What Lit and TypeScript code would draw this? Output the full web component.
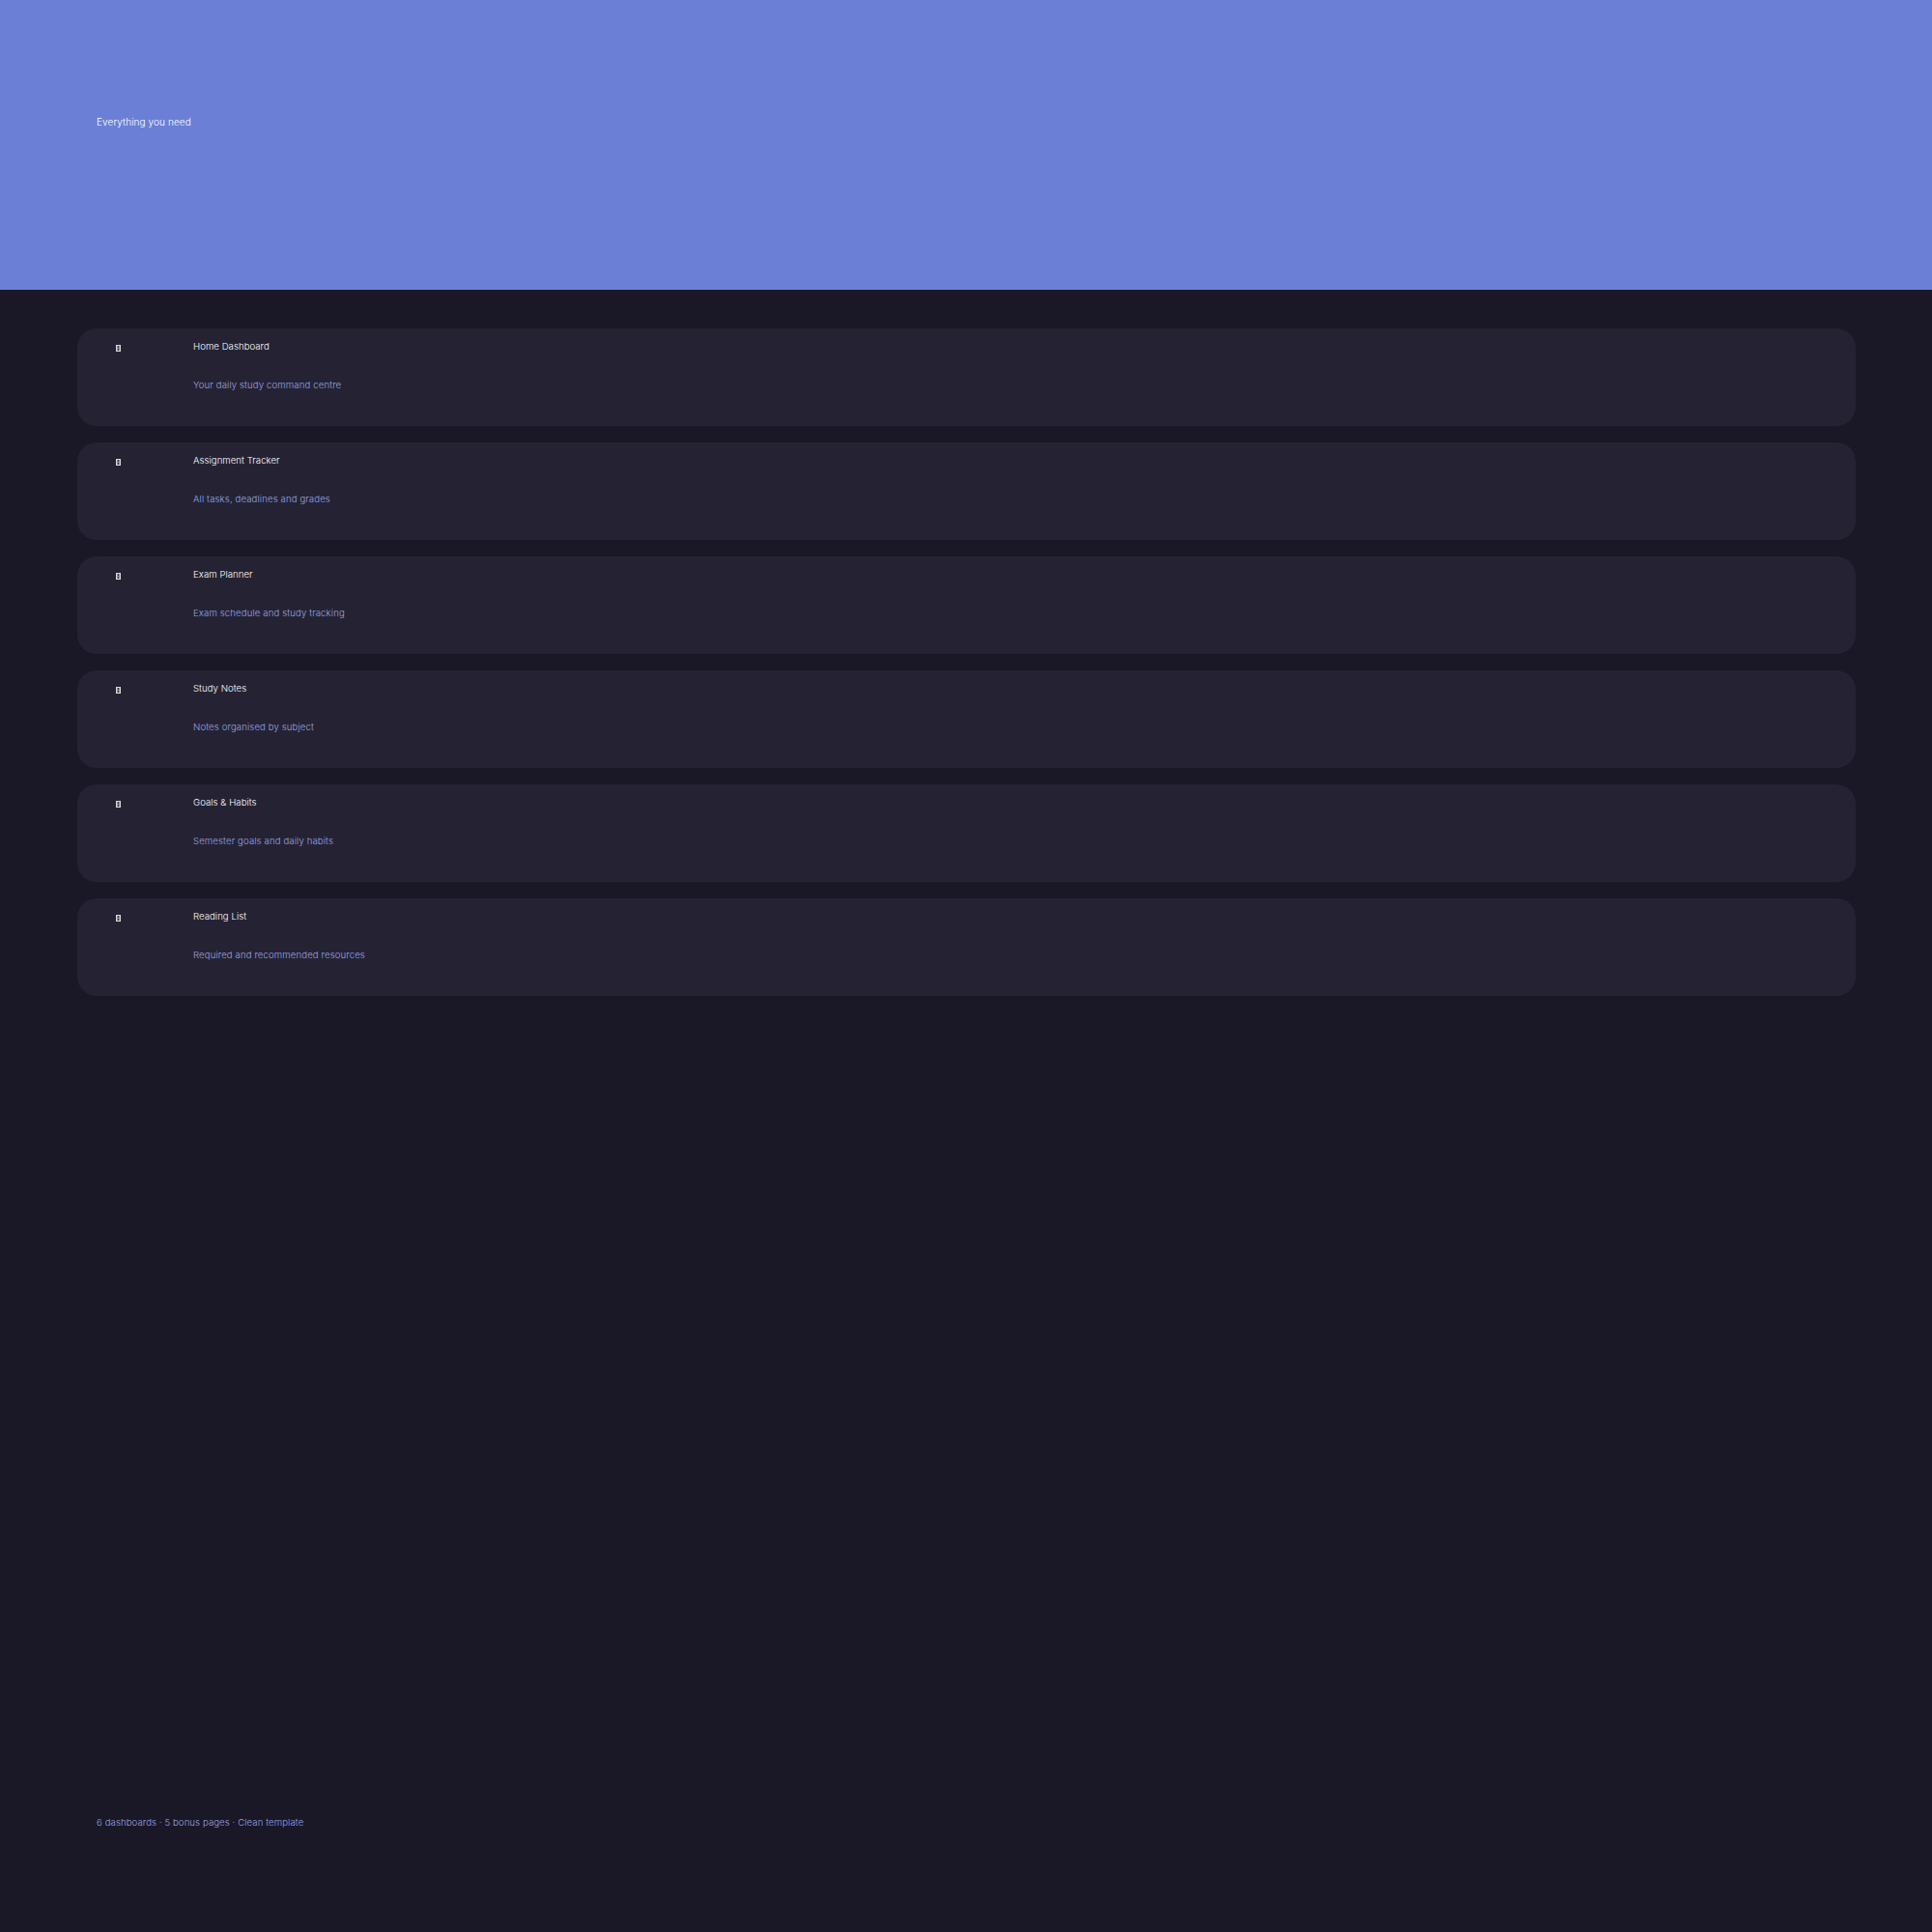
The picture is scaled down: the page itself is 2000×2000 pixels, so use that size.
import { LitElement, html, css, svg } from "lit";
import { customElement } from "lit/decorators.js";

const ROWS = [
  ["Home Dashboard", "Your daily study command centre"],
  ["Assignment Tracker", "All tasks, deadlines and grades"],
  ["Exam Planner", "Exam schedule and study tracking"],
  ["Study Notes", "Notes organised by subject"],
  ["Goals & Habits", "Semester goals and daily habits"],
  ["Reading List", "Required and recommended resources"],
];

const glyph = svg`
  <rect width="5" height="7" fill="#d6d6da"/>
  <rect x="1" y="1" width="3" height="5" fill="#8f8f96"/>
  <rect x="2" y="1" width="1" height="2" fill="#35343f"/>
  <rect x="2" y="4" width="1" height="2" fill="#35343f"/>
`;

@customElement("app-root")
export class AppRoot extends LitElement {
  static styles = css`
    :host { display: block; }
    .page {
      width: 2000px; height: 2000px; background: #1a1826;
      display: flex; flex-direction: column;
      font-family: Inter, "Liberation Sans", sans-serif;
      font-weight: 350;
    }
    .hero {
      height: 300px; box-sizing: border-box;
      background: #6b7fd7;
      padding: 118px 100px 0;
      color: #fff; font-size: 10px; line-height: 16px; letter-spacing: 0.1px;
    }
    .list { display: flex; flex-direction: column; gap: 17px; padding: 40px 79px 0 80px; }
    .card {
      height: 101px; background: #252333; border-radius: 20px;
      display: grid; grid-template-columns: 120px 1fr;
    }
    .icon { padding: 17px 0 0 40px; }
    .icon svg { display: block; width: 5px; height: 7px; shape-rendering: crispEdges; }
    .title { color: #fff; font-size: 9.6px; line-height: 16px; margin-top: 11px; letter-spacing: 0.05px; }
    .sub { color: #97a3e8; font-size: 9.6px; line-height: 16px; margin-top: 24px; letter-spacing: 0.12px; }
    .foot { margin-top: auto; padding: 0 100px 105px; color: #97a3e8; font-size: 9.6px; line-height: 16px; letter-spacing: 0.09px; }
  `;
  render() {
    return html`<div class="page">
      <div class="hero">Everything you need</div>
      <div class="list">
        ${ROWS.map(([t, s]) => html`<div class="card">
          <div class="icon"><svg viewBox="0 0 5 7">${glyph}</svg></div>
          <div><div class="title">${t}</div><div class="sub">${s}</div></div>
        </div>`)}
      </div>
      <div class="foot">6 dashboards · 5 bonus pages · Clean template</div>
    </div>`;
  }
}
